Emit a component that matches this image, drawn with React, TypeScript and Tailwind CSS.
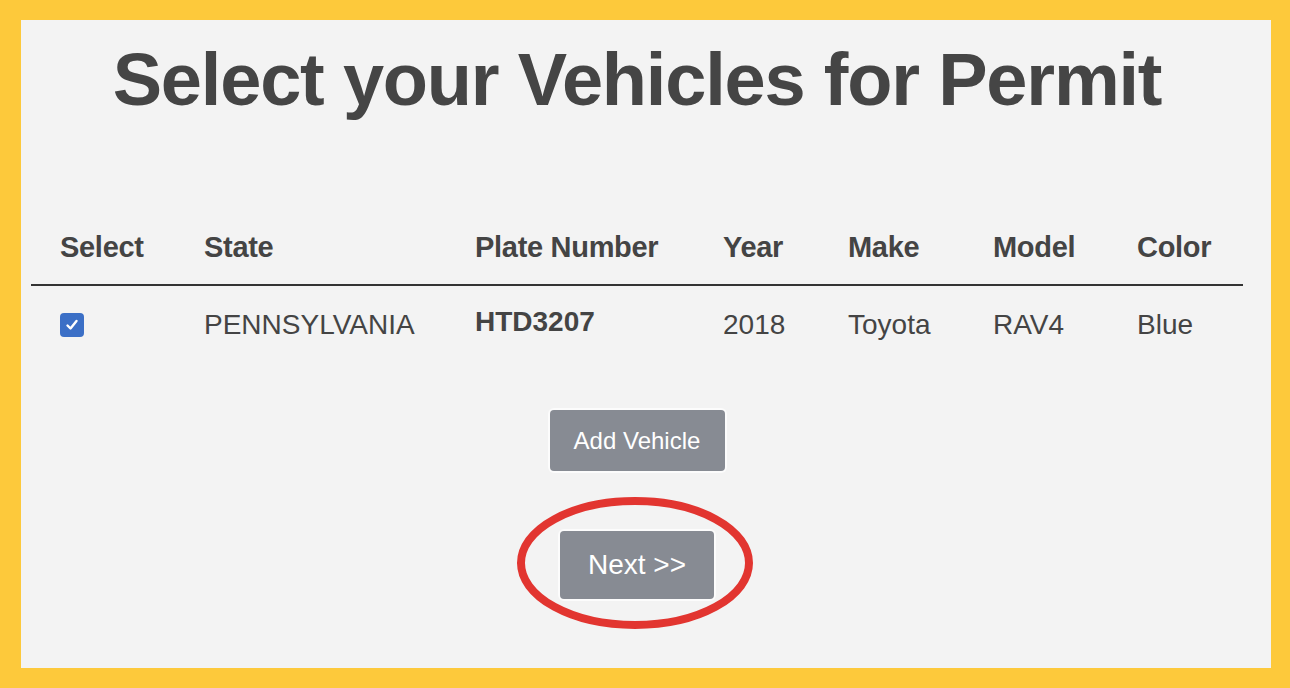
import React from "react";

const headers = ["Select", "State", "Plate Number", "Year", "Make", "Model", "Color"];

const vehicles = [
  { state: "PENNSYLVANIA", plate: "HTD3207", year: "2018", make: "Toyota", model: "RAV4", color: "Blue" },
];

const cols = "grid grid-cols-[144px_271px_248px_125px_145px_144px_1fr] px-[29px]";

function CheckBox() {
  return (
    <div className="w-[24px] h-[24px] rounded-[4px] bg-[#3b6fc6] flex items-center justify-center">
      <svg viewBox="0 0 16 16" className="w-[16px] h-[16px]">
        <path d="M3.5 8.5 L6.5 11.5 L12.5 4" fill="none" stroke="white" strokeWidth="2.4" strokeLinecap="round" strokeLinejoin="round" />
      </svg>
    </div>
  );
}

export default function App() {
  return (
    <div className="w-[1290px] h-[688px] bg-[#fdc93b] pt-[20px] pl-[21px] pr-[19px] pb-[20px] font-['Liberation_Sans',Arial,sans-serif]">
      <div className="h-full bg-[#f3f3f3] pl-[10px] pr-[28px] flex flex-col">
        {/* titel */}
        <h1 className="mt-[23px] text-center text-[74px] leading-none font-bold tracking-[-1.2px] text-[#454545]">
          Select your Vehicles for Permit
        </h1>

        {/* tabel kendaraan */}
        <div className="mt-[116px]">
          <div className={`${cols} pb-[22px] border-b-2 border-[#333]`}>
            {headers.map((h) => (
              <div key={h} className="text-[29px] leading-none font-bold tracking-[-0.3px] text-[#444]">
                {h}
              </div>
            ))}
          </div>
          {vehicles.map((v) => (
            <div key={v.plate} className={`${cols} pt-[25px] text-[28px] leading-none text-[#444] items-center`}>
              <div className="h-[28px] flex items-center">
                <CheckBox />
              </div>
              <div>{v.state}</div>
              <div className="font-bold -mt-[6px]">{v.plate}</div>
              <div>{v.year}</div>
              <div>{v.make}</div>
              <div>{v.model}</div>
              <div>{v.color}</div>
            </div>
          ))}
        </div>

        {/* tombol */}
        <div className="mt-[71px] flex flex-col items-center">
          <button className="w-[175px] h-[61px] rounded-[4px] bg-[#878b93] text-white text-[24px] ring-2 ring-white/70">
            Add Vehicle
          </button>
          <div className="relative mt-[60px]">
            <button className="w-[154px] h-[68px] rounded-[4px] bg-[#878b93] text-white text-[28px] ring-2 ring-white/70">
              Next &gt;&gt;
            </button>
            <svg
              className="absolute left-[-45px] top-[-35px] pointer-events-none"
              width="244"
              height="140"
              viewBox="0 0 244 140"
            >
              <ellipse cx="120" cy="67" rx="114" ry="62" fill="none" stroke="#e23530" strokeWidth="8" />
            </svg>
          </div>
        </div>
      </div>
    </div>
  );
}
